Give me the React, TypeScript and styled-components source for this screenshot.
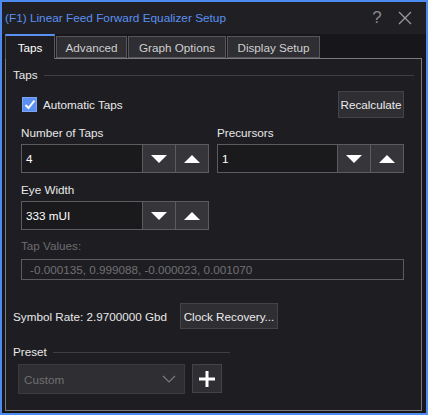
import React from "react";
import styled, { createGlobalStyle } from "styled-components";

const Global = createGlobalStyle`
  html, body {
    margin: 0;
    padding: 0;
    background: #17171b;
  }
  * {
    box-sizing: border-box;
  }
`;

const Window = styled.div`
  width: 428px;
  height: 415px;
  border: 2px solid #4d8bef;
  background: #17171b;
  display: flex;
  flex-direction: column;
  font-family: "Liberation Sans", Arial, sans-serif;
  font-size: 11.7px;
  color: #e8e8e8;
`;

const TitleBar = styled.div`
  height: 32px;
  background: #202024;
  display: flex;
  align-items: center;
  padding: 0 8px 0 3px;
`;

const Title = styled.div`
  flex: 1;
  color: #5a90f2;
  font-size: 11.8px;
`;

const TitleIcon = styled.div`
  width: 26px;
  height: 26px;
  display: flex;
  align-items: center;
  justify-content: center;
  color: #8a8a8e;
  font-size: 17px;
  margin-left: 2px;
`;

const TabRow = styled.div`
  height: 24px;
  display: flex;
  align-items: flex-end;
  gap: 1px;
  padding-left: 3px;
`;

const Tab = styled.div<{ $active?: boolean; $w: number }>`
  width: ${(p) => p.$w}px;
  height: ${(p) => (p.$active ? 25 : 22)}px;
  margin-bottom: ${(p) => (p.$active ? -1 : 0)}px;
  display: flex;
  align-items: center;
  justify-content: center;
  background: ${(p) => (p.$active ? "#1e1e22" : "#2e2e33")};
  border: 1px solid #58585c;
  border-bottom: ${(p) => (p.$active ? "none" : "1px solid #58585c")};
  border-top: ${(p) => (p.$active ? "2px solid #5a90f2" : "1px solid #58585c")};
  color: ${(p) => (p.$active ? "#ffffff" : "#d0d0d0")};
  position: relative;
  z-index: ${(p) => (p.$active ? 1 : 0)};
`;

const Panel = styled.div`
  margin-left: 3px;
  width: 417px;
  height: 353px;
  border: 1px solid #7a7a7e;
  background: #1e1e22;
  padding: 8px 7px 0 7px;
  display: flex;
  flex-direction: column;
`;

const GroupHeader = styled.div`
  display: flex;
  align-items: center;
  line-height: 16px;
  gap: 6px;
  &::after {
    content: "";
    flex: 1;
    height: 1px;
    background: #3e3e44;
  }
`;

const ShortHeader = styled(GroupHeader)`
  width: 217px;
`;

const GroupBody = styled.div`
  padding: 0 10px 0 8px;
  display: flex;
  flex-direction: column;
`;

const CheckRow = styled.div`
  margin-top: 8px;
  height: 27px;
  display: flex;
  align-items: center;
`;

const CheckBox = styled.div`
  width: 15px;
  height: 15px;
  margin: 0 6px 0 1px;
  background: #5b8ff0;
  border: 1px solid #7aa6f5;
  display: flex;
  align-items: center;
  justify-content: center;
`;

const CheckLabel = styled.span`
  flex: 1;
`;

const Button = styled.div<{ $w: number; $h: number }>`
  width: ${(p) => p.$w}px;
  height: ${(p) => p.$h}px;
  display: flex;
  align-items: center;
  justify-content: center;
  background: #2e2e33;
  border: 1px solid #434348;
  color: #ececec;
  white-space: nowrap;
`;

const FieldGrid = styled.div`
  display: grid;
  grid-template-columns: 188px 187px;
  column-gap: 8px;
`;

const Field = styled.div<{ $top: number }>`
  display: flex;
  flex-direction: column;
  margin-top: ${(p) => p.$top}px;
`;

const Label = styled.div<{ $dim?: boolean }>`
  line-height: 16px;
  margin-bottom: 3px;
  color: ${(p) => (p.$dim ? "#6c6c70" : "#e8e8e8")};
`;

const SpinBox = styled.div`
  height: 29px;
  display: flex;
  border: 1px solid #5c5c60;
  background: #1a1a1d;
`;

const SpinValue = styled.div`
  flex: 1;
  display: flex;
  align-items: center;
  padding-left: 4px;
  color: #ffffff;
`;

const SpinButton = styled.div`
  width: 33px;
  display: flex;
  align-items: center;
  justify-content: center;
  background: #35353a;
  border-left: 1px solid #5c5c60;
`;

const TextBox = styled.div`
  margin-top: 2px;
  height: 21px;
  display: flex;
  align-items: center;
  padding-left: 8px;
  border: 1px solid #5c5c60;
  background: #1e1e22;
  color: #707074;
`;

const SymbolRow = styled.div`
  margin-top: 23px;
  display: flex;
  align-items: center;
  gap: 13px;
`;

const PresetHeaderWrap = styled.div`
  margin-top: 15px;
`;

const PresetRow = styled.div`
  margin-top: 4px;
  padding-left: 5px;
  display: flex;
  gap: 7px;
`;

const Combo = styled.div`
  width: 167px;
  height: 30px;
  display: flex;
  align-items: center;
  justify-content: space-between;
  padding: 0 8px 0 5px;
  background: #2e2e33;
  border: 1px solid #3a3a3f;
  color: #6e6e72;
`;

const PlusButton = styled.div`
  width: 30px;
  height: 29px;
  display: flex;
  align-items: center;
  justify-content: center;
  background: #2e2e33;
  border: 1px solid #434348;
`;

const Down = () => (
  <svg width="18" height="10" viewBox="0 0 18 10">
    <polygon points="1,1 17,1 9,9" fill="#ffffff" />
  </svg>
);

const Up = () => (
  <svg width="18" height="10" viewBox="0 0 18 10">
    <polygon points="1,9 17,9 9,1" fill="#ffffff" />
  </svg>
);

const Spin = ({ value }: { value: string }) => (
  <SpinBox>
    <SpinValue>{value}</SpinValue>
    <SpinButton>
      <Down />
    </SpinButton>
    <SpinButton>
      <Up />
    </SpinButton>
  </SpinBox>
);

export default function App() {
  return (
    <>
      <Global />
      <Window>
        <TitleBar>
          <Title>(F1) Linear Feed Forward Equalizer Setup</Title>
          <TitleIcon>?</TitleIcon>
          <TitleIcon>
            <svg width="14" height="14" viewBox="0 0 14 14">
              <path d="M1 1 L13 13 M13 1 L1 13" stroke="#9a9a9e" strokeWidth="1.3" />
            </svg>
          </TitleIcon>
        </TitleBar>
        <TabRow>
          <Tab $active $w={50}>Taps</Tab>
          <Tab $w={71}>Advanced</Tab>
          <Tab $w={98}>Graph Options</Tab>
          <Tab $w={93}>Display Setup</Tab>
        </TabRow>
        <Panel>
          <GroupHeader>Taps</GroupHeader>
          <GroupBody>
            <CheckRow>
              <CheckBox>
                <svg width="12" height="11" viewBox="0 0 12 11">
                  <path d="M1.5 6 L4.5 9 L10.5 1.5" stroke="#ffffff" strokeWidth="2" fill="none" />
                </svg>
              </CheckBox>
              <CheckLabel>Automatic Taps</CheckLabel>
              <Button $w={66} $h={27}>Recalculate</Button>
            </CheckRow>
            <FieldGrid>
              <Field $top={7}>
                <Label>Number of Taps</Label>
                <Spin value="4" />
              </Field>
              <Field $top={7}>
                <Label>Precursors</Label>
                <Spin value="1" />
              </Field>
              <Field $top={9}>
                <Label>Eye Width</Label>
                <Spin value="333 mUI" />
              </Field>
            </FieldGrid>
            <Field $top={8}>
              <Label $dim>Tap Values:</Label>
              <TextBox>-0.000135, 0.999088, -0.000023, 0.001070</TextBox>
            </Field>
          </GroupBody>
          <SymbolRow>
            <span>Symbol Rate: 2.9700000 Gbd</span>
            <Button $w={98} $h={26}>Clock Recovery...</Button>
          </SymbolRow>
          <PresetHeaderWrap>
            <ShortHeader>Preset</ShortHeader>
          </PresetHeaderWrap>
          <PresetRow>
            <Combo>
              <span>Custom</span>
              <svg width="14" height="8" viewBox="0 0 14 8">
                <path d="M1 1 L7 7 L13 1" stroke="#7a7a7e" strokeWidth="1.2" fill="none" />
              </svg>
            </Combo>
            <PlusButton>
              <svg width="18" height="18" viewBox="0 0 18 18">
                <path d="M9 1 V17 M1 9 H17" stroke="#ffffff" strokeWidth="3" />
              </svg>
            </PlusButton>
          </PresetRow>
        </Panel>
      </Window>
    </>
  );
}
